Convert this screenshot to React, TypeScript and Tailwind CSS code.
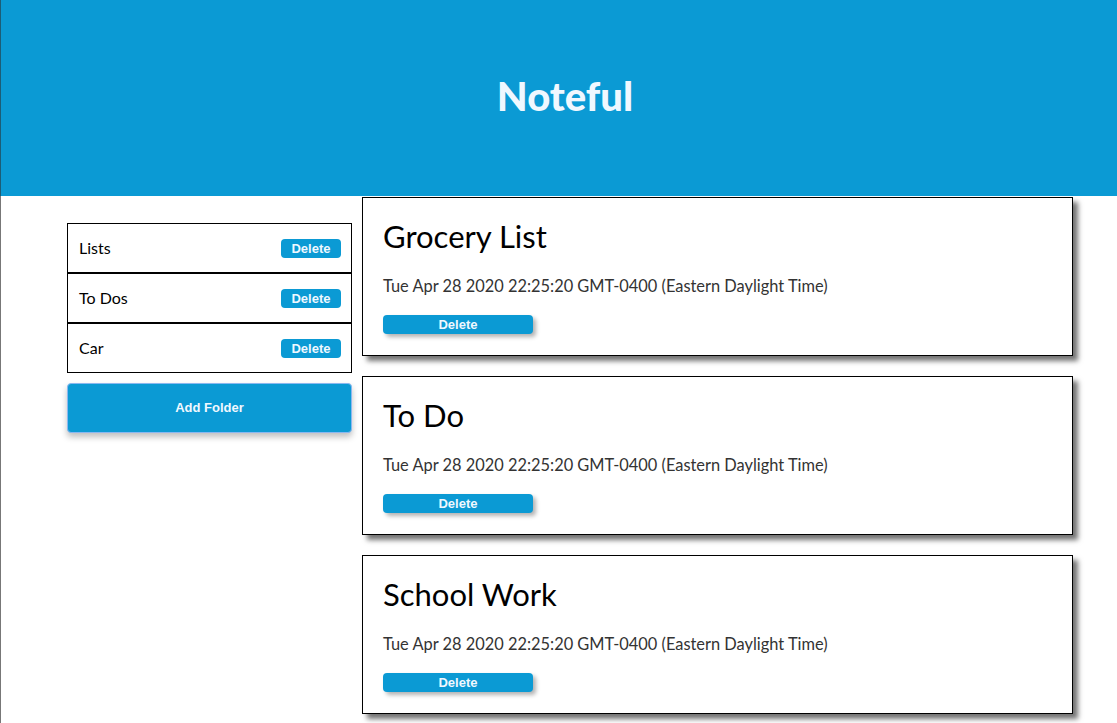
import React from "react";

type Folder = { id: string; name: string };
type Note = { id: string; name: string; modified: string };

const folders: Folder[] = [
  { id: "1", name: "Lists" },
  { id: "2", name: "To Dos" },
  { id: "3", name: "Car" },
];

const modified = "Tue Apr 28 2020 22:25:20 GMT-0400 (Eastern Daylight Time)";

const notes: Note[] = [
  { id: "a", name: "Grocery List", modified },
  { id: "b", name: "To Do", modified },
  { id: "c", name: "School Work", modified },
];

const body = { fontFamily: "Lato, 'Noto Sans', sans-serif" };
const btn = { fontFamily: "'Liberation Sans', Arial, sans-serif" };

function FolderItem({ folder }: { folder: Folder }) {
  return (
    <li className="flex h-[50px] items-center justify-between border border-black pl-[11px] pr-[10px]">
      <span className="text-[16px] text-black">{folder.name}</span>
      <button
        style={btn}
        className="h-[19px] w-[60px] rounded-[4px] bg-[#0b9ad4] text-[13px] font-bold text-[#f0f8ff]"
      >
        Delete
      </button>
    </li>
  );
}

function NoteCard({ note }: { note: Note }) {
  return (
    <div className="flex h-[159px] flex-col border border-black bg-white px-[20px] pt-[18px] shadow-[5px_5px_5px_rgba(0,0,0,0.55)]">
      <h2 className="h-[40px] text-[31px] leading-[40px] text-black">{note.name}</h2>
      <p className="mt-[20px] h-[20px] text-[16.4px] leading-[20px] text-[#333]">{note.modified}</p>
      <button
        style={btn}
        className="mt-[19px] h-[19px] w-[150px] rounded-[4px] bg-[#0b9ad4] text-[13px] font-bold text-[#f0f8ff] shadow-[3px_3px_4px_rgba(0,0,0,0.3)]"
      >
        Delete
      </button>
    </div>
  );
}

export default function App() {
  return (
    <div style={body} className="min-h-[723px] bg-white">
      <header className="flex h-[196px] items-center justify-center border-l border-[#1c5d76] bg-[#0b9ad4]">
        <h1 className="mb-[4px] ml-[12px] text-[40px] font-black text-[#f0f8ff]">Noteful</h1>
      </header>
      <div className="flex min-h-[527px] gap-[10px] border-l border-[#777] pl-[66px]">
        <nav className="w-[285px] pt-[27px]">
          <ul>
            {folders.map((f) => (
              <FolderItem key={f.id} folder={f} />
            ))}
          </ul>
          <button
            style={btn}
            className="mt-[10px] h-[50px] w-full rounded-[4px] border border-[#8ab8f0] bg-[#0b9ad4] text-[13px] font-bold text-[#f0f8ff] shadow-[0_4px_6px_rgba(0,0,0,0.25)]"
          >
            Add Folder
          </button>
        </nav>
        <main className="flex w-[711px] flex-col gap-[20px] pt-[1px]">
          {notes.map((n) => (
            <NoteCard key={n.id} note={n} />
          ))}
        </main>
      </div>
    </div>
  );
}
